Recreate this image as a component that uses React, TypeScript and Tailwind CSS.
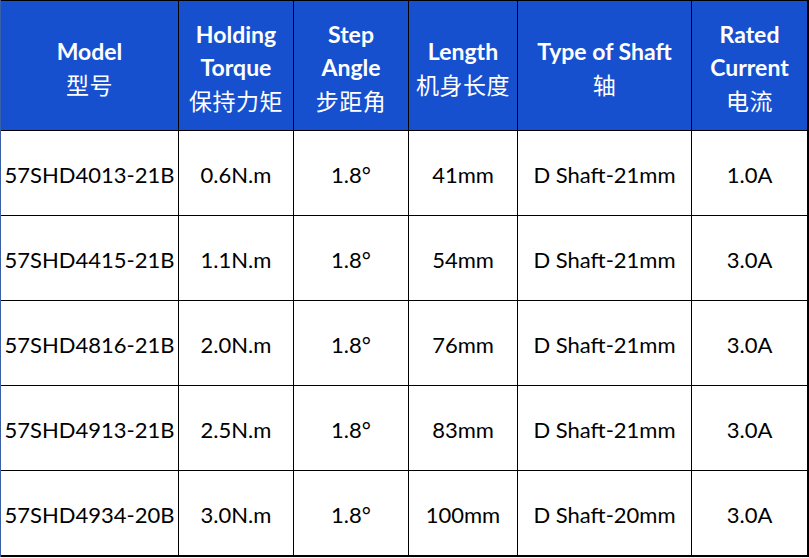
import React from "react";

interface MotorRow {
  model: string;
  torque: string;
  angle: string;
  length: string;
  shaft: string;
  current: string;
}

const headers: { en: string[]; zh: string }[] = [
  { en: ["Model"], zh: "型号" },
  { en: ["Holding", "Torque"], zh: "保持力矩" },
  { en: ["Step", "Angle"], zh: "步距角" },
  { en: ["Length"], zh: "机身长度" },
  { en: ["Type of Shaft"], zh: "轴" },
  { en: ["Rated", "Current"], zh: "电流" },
];

const rows: MotorRow[] = [
  { model: "57SHD4013-21B", torque: "0.6N.m", angle: "1.8°", length: "41mm", shaft: "D Shaft-21mm", current: "1.0A" },
  { model: "57SHD4415-21B", torque: "1.1N.m", angle: "1.8°", length: "54mm", shaft: "D Shaft-21mm", current: "3.0A" },
  { model: "57SHD4816-21B", torque: "2.0N.m", angle: "1.8°", length: "76mm", shaft: "D Shaft-21mm", current: "3.0A" },
  { model: "57SHD4913-21B", torque: "2.5N.m", angle: "1.8°", length: "83mm", shaft: "D Shaft-21mm", current: "3.0A" },
  { model: "57SHD4934-20B", torque: "3.0N.m", angle: "1.8°", length: "100mm", shaft: "D Shaft-20mm", current: "3.0A" },
];

export default function App() {
  return (
    <div className="w-[809px] h-[558px] bg-[#f4f4f4] font-['Lato','Noto_Sans_CJK_SC',sans-serif]">
      <div className="w-[809px] bg-black border-l border-[#3b5fa6] pt-px pr-px pb-[2px]">
        <div className="grid grid-cols-[177px_114px_114px_108px_173px_115px] grid-rows-[129px_repeat(5,84px)] gap-px pl-px -ml-px">
          {headers.map((h) => (
            <div
              key={h.zh}
              className="bg-[#1750cf] text-white flex flex-col items-center justify-center pt-[4px] leading-[33px] text-center"
            >
              {h.en.map((line) => (
                <span key={line} className="text-[23px] font-bold whitespace-nowrap">
                  {line}
                </span>
              ))}
              <span className="text-[23px] font-['Noto_Sans_CJK_SC',sans-serif] font-normal tracking-[0.5px]">
                {h.zh}
              </span>
            </div>
          ))}

          {rows.map((r) => (
            <React.Fragment key={r.model}>
              {[r.model, r.torque, r.angle, r.length, r.shaft, r.current].map((v, i) => (
                <div
                  key={i}
                  className="bg-white text-black flex items-center justify-center pt-[3px] text-[22px] whitespace-nowrap"
                >
                  {v}
                </div>
              ))}
            </React.Fragment>
          ))}
        </div>
      </div>
    </div>
  );
}
